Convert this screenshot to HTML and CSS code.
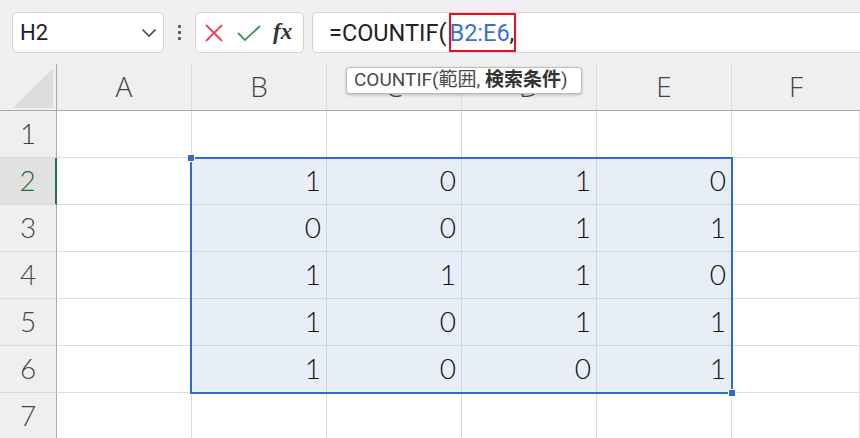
FILE: index.html
```html
<!DOCTYPE html>
<html lang="ja">
<head>
<meta charset="utf-8">
<link rel="stylesheet" href="styles.css">
</head>
<body>
<div class="app">
  <div class="toolbar">
    <div class="namebox">
      <span class="name">H2</span>
      <svg class="chev" width="16" height="10" viewBox="0 0 16 10"><path d="M1.5 1.5 L8 8 L14.5 1.5" fill="none" stroke="#444" stroke-width="1.6"/></svg>
    </div>
    <div class="dots"><i></i><i></i><i></i></div>
    <div class="btns">
      <svg class="ico" width="22" height="22" viewBox="0 0 22 22"><path d="M3 3 L19 19 M19 3 L3 19" stroke="#e5484d" stroke-width="1.8" fill="none"/></svg>
      <svg class="ico" width="26" height="22" viewBox="0 0 26 22"><path d="M2 11 L9 18 L24 4" stroke="#3a9d4f" stroke-width="1.9" fill="none"/></svg>
      <span class="fx">fx</span>
    </div>
    <div class="formula">
      <span class="ftext">=COUNTIF(<span class="ref">B2:E6</span>,</span>
      <span class="refbox"></span>
    </div>
  </div>
  <div class="sheet">
    <div class="grid">
      <div class="corner"><div class="tri"></div></div>
      <div class="ch">A</div><div class="ch">B</div><div class="ch">C</div><div class="ch">D</div><div class="ch">E</div><div class="ch last">F</div>

      <div class="rh">1</div><div class="c"></div><div class="c"></div><div class="c"></div><div class="c"></div><div class="c"></div><div class="c"></div>

      <div class="rh act">2</div><div class="c"></div><div class="c s">1</div><div class="c s">0</div><div class="c s">1</div><div class="c s">0</div><div class="c"></div>

      <div class="rh">3</div><div class="c"></div><div class="c s">0</div><div class="c s">0</div><div class="c s">1</div><div class="c s">1</div><div class="c"></div>

      <div class="rh">4</div><div class="c"></div><div class="c s">1</div><div class="c s">1</div><div class="c s">1</div><div class="c s">0</div><div class="c"></div>

      <div class="rh">5</div><div class="c"></div><div class="c s">1</div><div class="c s">0</div><div class="c s">1</div><div class="c s">1</div><div class="c"></div>

      <div class="rh">6</div><div class="c"></div><div class="c s">1</div><div class="c s">0</div><div class="c s">0</div><div class="c s">1</div><div class="c"></div>

      <div class="rh">7</div><div class="c"></div><div class="c"></div><div class="c"></div><div class="c"></div><div class="c"></div><div class="c"></div>
    </div>
    <div class="sel"><span class="h tl"></span><span class="h br"></span></div>
    <div class="tip"><span>COUNTIF(範囲, </span><b>検索条件</b><span>)</span></div>
  </div>
</div>
</body>
</html>
```
FILE: styles.css
```css
* { box-sizing: border-box; }
html, body { margin: 0; padding: 0; }
body { width: 860px; height: 438px; overflow: hidden; background: #f0f0f0; font-family: Roboto, "Noto Sans CJK JP", sans-serif; color: #222; }
.app { width: 860px; height: 438px; position: relative; }
.toolbar { height: 64px; display: flex; align-items: flex-start; padding: 12px 0 0 12px; }
.namebox { width: 152px; height: 41px; background: #fff; border: 1px solid #d4d4d4; border-radius: 5px; display: flex; align-items: center; justify-content: space-between; padding: 0 6px 0 7px; }
.name { font-size: 22px; color: #222; }
.chev { margin-top: 1px; }
.dots { width: 31px; height: 41px; display: flex; flex-direction: column; align-items: center; justify-content: center; gap: 3px; }
.dots i { display: block; width: 3px; height: 3px; background: #555; border-radius: 1px; }
.btns { width: 109px; height: 41px; background: #fff; border: 1px solid #d4d4d4; border-radius: 5px; display: flex; align-items: center; padding: 0 0 0 7px; gap: 11px; }
.fx { font-family: "Liberation Serif", serif; font-style: italic; font-weight: bold; font-size: 23px; color: #333; margin-top: -2px; }
.formula { position: relative; margin-left: 8px; flex: 1; height: 41px; background: #fff; border: 1px solid #d4d4d4; border-right: none; border-radius: 5px 0 0 5px; display: flex; align-items: center; padding-left: 16px; }
.ftext { font-size: 23.5px; color: #222; }
.ref { color: #3b6fd0; margin-left: 3px; }
.refbox { position: absolute; left: 136px; top: 0; width: 67px; height: 39px; border: 2px solid #e81123; }
.sheet { position: relative; }
.grid { display: grid; grid-template-columns: 57px repeat(5, 135px) 1fr; grid-template-rows: 47px repeat(7, 47px); }
.corner { background: #efefef; border-right: 1px solid #a9a9a9; border-bottom: 1px solid #a9a9a9; position: relative; }
.tri { position: absolute; right: 3px; bottom: 2px; width: 0; height: 0; border-left: 40px solid transparent; border-bottom: 39px solid #dcdcdc; }
.ch { background: #efefef; border-bottom: 1px solid #a9a9a9; border-right: 1px solid #dadada; display: flex; align-items: center; justify-content: center; font-size: 28px; color: #444; font-family: "Open Sans", sans-serif; font-weight: 300; padding-bottom: 3px; }
.ch.last { border-right: none; }
.rh { background: #efefef; border-right: 1px solid #a9a9a9; border-bottom: 1px solid #dadada; display: flex; align-items: center; justify-content: center; font-size: 28px; color: #444; font-family: Lato, sans-serif; font-weight: 300; padding-bottom: 2px; }
.rh.act { background: #e1e1e1; color: #1f6f43; border-right: 2px solid #217346; }
.c { background: #fff; border-right: 1px solid #dcdcdc; border-bottom: 1px solid #dcdcdc; display: flex; align-items: center; justify-content: flex-end; padding: 0 5px 3px 0; font-size: 28px; color: #111; font-family: Lato, sans-serif; font-weight: 300; }
.c.s { background: #e8eef8; border-color: #d0d6de; }
.sel { position: absolute; left: 190px; top: 93px; width: 543px; height: 237px; border: 2px solid #2f6cc9; pointer-events: none; }
.h { position: absolute; width: 6px; height: 6px; background: #2f6cc9; outline: 1px solid #fff; }
.h.tl { left: -4px; top: -4px; }
.h.br { right: -4px; bottom: -4px; }
.tip { position: absolute; left: 346px; top: 3px; width: 236px; height: 27px; background: #fff; border: 1px solid #bdbdbd; border-radius: 4px; box-shadow: 0 1px 3px rgba(0,0,0,0.25); font-size: 19px; line-height: 24px; color: #4a4a4a; padding-left: 7px; white-space: nowrap; }
.tip span { white-space: pre; }
.tip b { font-weight: bold; color: #333; }
```
